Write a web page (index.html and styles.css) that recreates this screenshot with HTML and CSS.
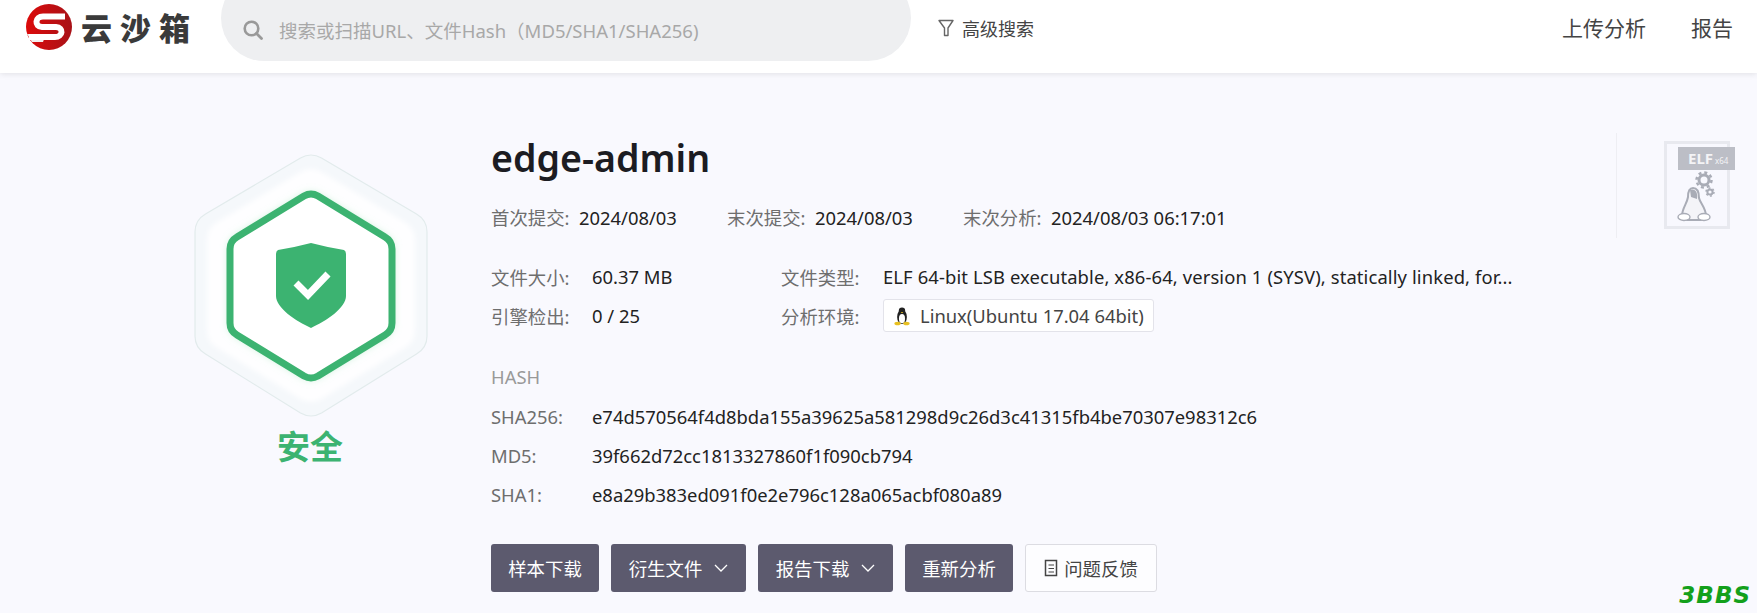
FILE: index.html
```html
<!DOCTYPE html>
<html lang="zh-CN">
<head>
    <meta charset="UTF-8">
    <meta name="viewport" content="width=device-width, initial-scale=1.0">
    <title>edge-admin - 云沙箱</title>
    <link rel="stylesheet" href="styles.css">
</head>
<body>
    <header class="topbar">
        <a class="logo">
            <svg class="logo-mark" viewBox="0 0 46 46" width="46" height="46">
                <defs>
                    <linearGradient id="logoRed" x1="0" y1="0" x2="1" y2="0">
                        <stop offset="0" stop-color="#dc0a0a"/>
                        <stop offset="1" stop-color="#a81218"/>
                    </linearGradient>
                </defs>
                <circle cx="23" cy="23" r="23" fill="url(#logoRed)"/>
                <path d="M1 30 H20 L17 38 H6 Z" fill="#f4eeee"/>
                <path d="M39 12.5 H17 C9 12.5 8 22.5 16 23 H30 C38 23.5 37 33 29 33 H3" fill="none" stroke="#fff" stroke-width="6"/>
            </svg>
            <span class="logo-text">云沙箱</span>
        </a>
        <div class="search">
            <svg class="search-icon" viewBox="0 0 20 20" width="20" height="20">
                <circle cx="8.5" cy="8.5" r="6.8" fill="none" stroke="#999" stroke-width="2.6"/>
                <path d="M13.5 13.5 L18.5 18.5" stroke="#999" stroke-width="2.8" stroke-linecap="round"/>
            </svg>
            <span class="search-text">搜索或扫描URL、文件Hash（MD5/SHA1/SHA256)</span>
        </div>
        <a class="advanced">
            <svg viewBox="0 0 16 18" width="16" height="18">
                <path d="M1 1.5 H15 L10 9 V16.5 H6.5 V9 Z" fill="none" stroke="#666" stroke-width="1.4" stroke-linejoin="round"/>
            </svg>
            高级搜索
        </a>
        <nav class="nav">
            <a>上传分析</a>
            <a>报告</a>
        </nav>
    </header>

    <main class="content">
        <section class="verdict">
            <svg class="hex" viewBox="190 150 240 272" width="240" height="272">
                <defs>
                    <filter id="softGlow" x="-20%" y="-20%" width="140%" height="140%">
                        <feGaussianBlur stdDeviation="5"/>
                    </filter>
                    <filter id="paleBlur" x="-10%" y="-10%" width="120%" height="120%">
                        <feGaussianBlur stdDeviation="2.5"/>
                    </filter>
                </defs>
                <path d="M300.5 158 Q311 152 321.5 158 L416.5 214 Q427 220 427 232 V336 Q427 348 416.5 354 L321.5 413 Q311 419 300.5 413 L205.5 354 Q195 348 195 336 V232 Q195 220 205.5 214 Z" fill="#f5f8fb" stroke="#e2ebec" stroke-width="1.2"/>
                <path d="M300.6 172 Q311 166 321.4 172 L404.6 222 Q415 228 415 240 V330 Q415 342 404.6 348 L321.4 399 Q311 405 300.6 399 L217.4 348 Q207 342 207 330 V240 Q207 228 217.4 222 Z" fill="#fefeff" filter="url(#paleBlur)"/>
                <path d="M304 196 Q311 192 318 196 L385 237 Q392 241 392 249 V323 Q392 331 385 335 L318 376 Q311 380 304 376 L237 335 Q230 331 230 323 V249 Q230 241 237 237 Z" fill="#a6e8bd" filter="url(#softGlow)"/>
                <path d="M304 196 Q311 192 318 196 L385 237 Q392 241 392 249 V323 Q392 331 385 335 L318 376 Q311 380 304 376 L237 335 Q230 331 230 323 V249 Q230 241 237 237 Z" fill="#fff" stroke="#3cb371" stroke-width="7"/>
                <path d="M311 243 Q326 247 344 250 Q346 251 346 254 V296 C346 308 326 321 311 328 C296 321 276 308 276 296 V254 Q276 251 278 250 Q296 247 311 243 Z" fill="#3cb371"/>
                <path d="M296 283 L308 295 L328 274" fill="none" stroke="#fff" stroke-width="7"/>
            </svg>
            <div class="verdict-label">安全</div>
        </section>

        <section class="detail">
            <h1 class="file-name">edge-admin</h1>
            <div class="dates">
                <div class="date date-first"><span class="label">首次提交:</span><span>2024/08/03</span></div>
                <div class="date date-last"><span class="label">末次提交:</span><span>2024/08/03</span></div>
                <div class="date"><span class="label">末次分析:</span><span>2024/08/03 06:17:01</span></div>
            </div>

            <div class="facts">
                <span class="label">文件大小:</span>
                <span>60.37 MB</span>
                <span class="label">文件类型:</span>
                <span class="nowrap">ELF 64-bit LSB executable, x86-64, version 1 (SYSV), statically linked, for...</span>
                <span class="label">引擎检出:</span>
                <span>0 / 25</span>
                <span class="label">分析环境:</span>
                <span class="env-cell">
                    <span class="env-tag">
                        <svg viewBox="0 0 18 22" width="16" height="20">
                            <ellipse cx="9" cy="12" rx="5.5" ry="8" fill="#222"/>
                            <circle cx="9" cy="5" r="3.6" fill="#222"/>
                            <ellipse cx="9" cy="14" rx="3.4" ry="5.2" fill="#fff"/>
                            <path d="M7.5 6.5 H10.5 L9 8 Z" fill="#e8c020"/>
                            <ellipse cx="4" cy="19.5" rx="3.6" ry="2" fill="#e8c020"/>
                            <ellipse cx="14" cy="19.5" rx="3.6" ry="2" fill="#e8c020"/>
                        </svg>
                        Linux(Ubuntu 17.04 64bit)
                    </span>
                </span>
            </div>

            <div class="hash-title">HASH</div>
            <div class="hashes">
                <span class="label">SHA256:</span>
                <span>e74d570564f4d8bda155a39625a581298d9c26d3c41315fb4be70307e98312c6</span>
                <span class="label">MD5:</span>
                <span>39f662d72cc1813327860f1f090cb794</span>
                <span class="label">SHA1:</span>
                <span>e8a29b383ed091f0e2e796c128a065acbf080a89</span>
            </div>

            <div class="actions">
                <button class="btn btn-dark btn-plain">样本下载</button>
                <button class="btn btn-dark btn-menu">衍生文件
                    <svg viewBox="0 0 14 8" width="14" height="8"><path d="M1 1 L7 7 L13 1" fill="none" stroke="#fff" stroke-width="1.3"/></svg>
                </button>
                <button class="btn btn-dark btn-menu">报告下载
                    <svg viewBox="0 0 14 8" width="14" height="8"><path d="M1 1 L7 7 L13 1" fill="none" stroke="#fff" stroke-width="1.3"/></svg>
                </button>
                <button class="btn btn-dark btn-plain">重新分析</button>
                <button class="btn btn-light">
                    <svg viewBox="0 0 14 18" width="14" height="18">
                        <path d="M1.5 1.5 H12.5 V16.5 H1.5 Z" fill="none" stroke="#444" stroke-width="1.5"/>
                        <path d="M4.5 6 H10 M4.5 9.5 H10 M4.5 13 H10" stroke="#444" stroke-width="1.2"/>
                    </svg>
                    问题反馈
                </button>
            </div>
        </section>

        <aside class="file-type">
            <div class="file-icon">
                <div class="elf-tag">ELF<small>x64</small></div>
                <svg class="tux" viewBox="0 0 50 64" width="50" height="64">
                    <circle cx="29" cy="10" r="5" fill="none" stroke="#a9acb6" stroke-width="3"/>
                    <circle cx="29" cy="10" r="7.5" fill="none" stroke="#a9acb6" stroke-width="2.5" stroke-dasharray="3 2.9"/>
                    <circle cx="35" cy="22" r="2.6" fill="none" stroke="#a9acb6" stroke-width="2"/>
                    <circle cx="35" cy="22" r="4" fill="none" stroke="#a9acb6" stroke-width="1.5" stroke-dasharray="2 2.2"/>
                    <path d="M18 18 C23 18 24 24 24 28 C25 33 31 38 31 46 L27 50 H11 L7 46 C7 38 12 34 13 27 C13 22 14 18 18 18 Z" fill="#f4f4f8" stroke="#a9acb6" stroke-width="2"/>
                    <path d="M15 20 C20 18 23 22 22 29 L16 27 Z" fill="#a9acb6"/>
                    <ellipse cx="9" cy="47" rx="6" ry="3.5" fill="#fff" stroke="#a9acb6" stroke-width="1.4"/>
                    <ellipse cx="29" cy="47" rx="6" ry="3.5" fill="#fff" stroke="#a9acb6" stroke-width="1.4"/>
                </svg>
            </div>
        </aside>
    </main>

    <div class="watermark">3BBS</div>
</body>
</html>
```

FILE: styles.css
```css
* {
    box-sizing: border-box;
}
html, body {
    margin: 0;
    height: 613px;
    overflow: hidden;
}
body {
    position: relative;
    background-color: #f9f9fe;
    color: #222;
    font-family: "Noto Sans", "Noto Sans CJK SC", sans-serif;
    font-size: 18.4px;
}

/* header */
.topbar {
    display: flex;
    align-items: flex-start;
    height: 73px;
    padding-left: 26px;
    padding-right: 24px;
    background-color: #fff;
    box-shadow: 0 1px 6px rgba(0, 0, 0, 0.1);
}
.logo {
    display: flex;
    align-items: center;
    width: 195px;
    margin-top: 3px;
}
.logo-mark {
    margin-top: 1px;
}
.logo-text {
    margin-left: 9px;
    font-family: "Noto Sans CJK SC", sans-serif;
    font-size: 31px;
    font-weight: 900;
    letter-spacing: 8px;
    color: #3a3a3a;
    white-space: nowrap;
}
.search {
    display: flex;
    align-items: center;
    flex-shrink: 0;
    width: 690px;
    height: 86px;
    margin-top: -25px;
    padding-top: 23px;
    padding-left: 22px;
    border-radius: 43px;
    background-color: #eeeff1;
}
.search-text {
    margin-left: 16px;
    color: #a8a8a8;
    font-size: 18.5px;
}
.advanced {
    display: flex;
    align-items: center;
    gap: 8px;
    margin-left: 27px;
    margin-top: 15px;
    color: #444;
    font-size: 18px;
}
.nav {
    display: flex;
    gap: 45px;
    margin-left: auto;
    margin-top: 12px;
    color: #444;
    font-size: 21px;
}

/* main part */
.content {
    display: flex;
    align-items: flex-start;
}
.verdict {
    width: 491px;
    padding-top: 77px;
    padding-left: 190px;
}
.hex {
    display: block;
}
.verdict-label {
    width: 240px;
    margin-top: 3px;
    text-align: center;
    color: #3cb371;
    font-size: 33px;
    font-weight: 700;
    line-height: 44px;
}
.detail {
    width: 1125px;
    padding-top: 57px;
}
.file-name {
    margin: 0;
    font-size: 37.6px;
    font-weight: 600;
    line-height: 56px;
    color: #1c1c22;
}
.label {
    color: #6e6e6e;
    white-space: nowrap;
}
.dates {
    display: flex;
    margin-top: 20px;
    line-height: 24px;
}
.date {
    display: flex;
    gap: 10px;
}
.date .label {
    width: 78px;
}
.date-first, .date-last {
    width: 236px;
}
.facts {
    display: grid;
    grid-template-columns: 101px 189px 102px 520px;
    grid-auto-rows: 39px;
    align-items: center;
    margin-top: 27px;
}
.nowrap {
    white-space: nowrap;
    letter-spacing: 0.12px;
}
.env-tag {
    display: inline-flex;
    align-items: center;
    gap: 10px;
    height: 33px;
    padding: 0 9px 0 10px;
    border: 1px solid #e3e3ea;
    border-radius: 3px;
    background-color: #fff;
    color: #444;
    white-space: nowrap;
}
.env-cell {
    display: flex;
}
.hash-title {
    margin-top: 28px;
    line-height: 28px;
    color: #999;
}
.hashes {
    display: grid;
    grid-template-columns: 101px 1fr;
    grid-auto-rows: 39px;
    align-items: center;
    margin-top: 6px;
}
.actions {
    display: flex;
    gap: 12px;
    margin-top: 30px;
}
.btn {
    display: flex;
    align-items: center;
    justify-content: center;
    height: 48px;
    padding: 0;
    border: 0;
    border-radius: 3px;
    font-family: inherit;
    font-size: 18.4px;
}
.btn-dark {
    background-color: #5c5a6e;
    color: #fff;
}
.btn-plain {
    width: 108px;
}
.btn-menu {
    width: 135px;
    gap: 12px;
}
.btn-light {
    width: 132px;
    gap: 6px;
    border: 1px solid #dcdce2;
    background-color: #fdfdff;
    color: #444;
}

/* file type icon on the right */
.file-type {
    height: 105px;
    margin-top: 60px;
    padding-left: 47px;
    border-left: 1px solid #eeeef3;
}
.file-icon {
    position: relative;
    width: 66px;
    height: 88px;
    margin-top: 8px;
    border: 3px solid #e8e9ef;
    background-color: #f8f8fe;
}
.elf-tag {
    position: absolute;
    top: 3px;
    left: 11px;
    width: 57px;
    height: 23px;
    padding-left: 10px;
    background-color: #bcbec6;
    color: #f4f4f6;
    font-size: 15px;
    font-weight: 700;
    line-height: 23px;
}
.elf-tag small {
    margin-left: 2px;
    font-size: 8px;
    font-weight: 400;
}
.tux {
    position: absolute;
    top: 26px;
    left: 8px;
}
.watermark {
    position: absolute;
    right: 6px;
    bottom: 5px;
    color: #13a01b;
    font-family: "DejaVu Sans", sans-serif;
    font-size: 23px;
    font-style: italic;
    font-weight: 700;
    letter-spacing: 1px;
}
```
